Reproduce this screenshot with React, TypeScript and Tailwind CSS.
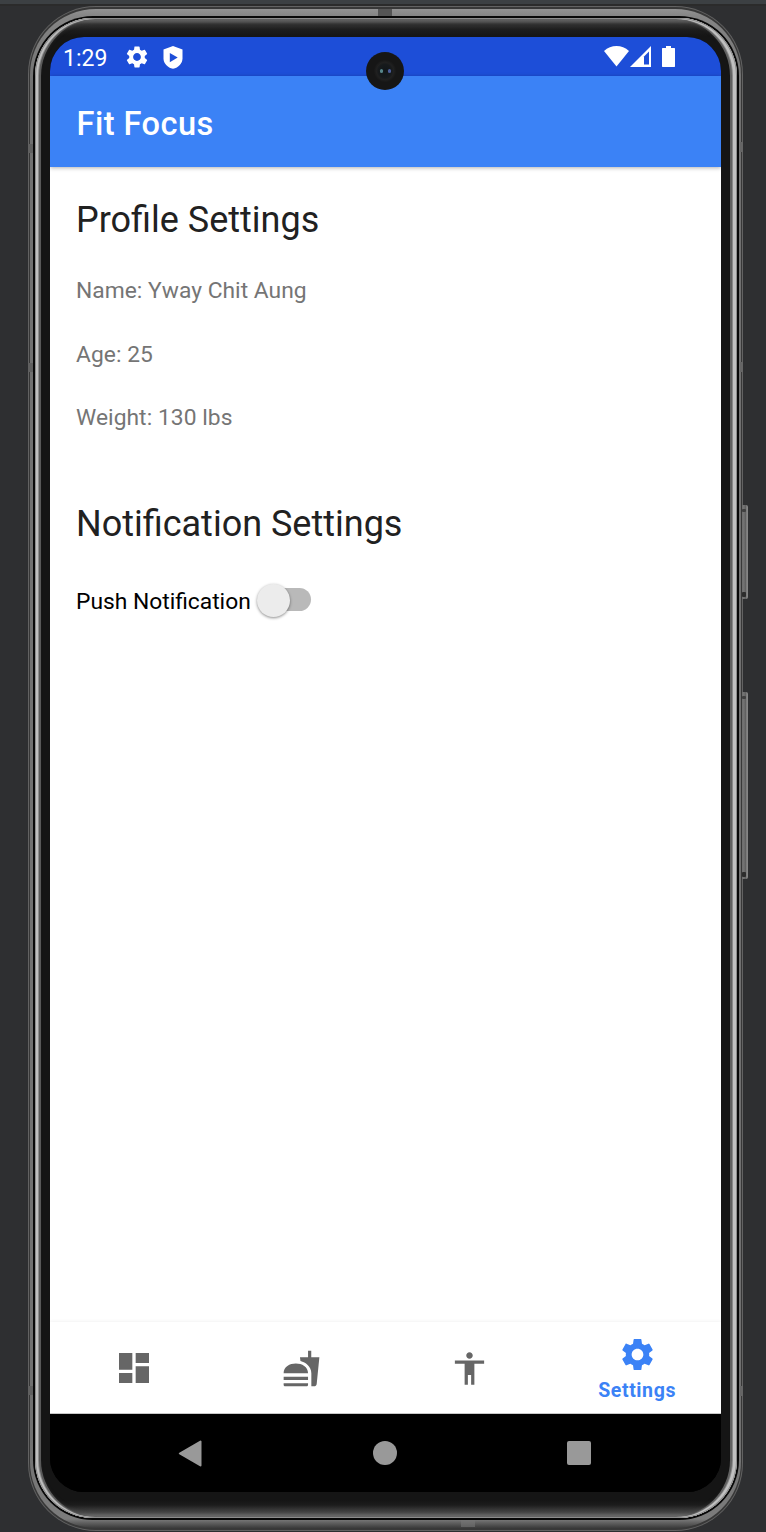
import React from "react";
import { MdAccessibility, MdDashboard, MdFastfood, MdSettings } from "react-icons/md";

function ShieldPlay() {
  return (
    <svg className="block h-[23px] w-[20px]" viewBox="0 0 20 23" fill="none">
      <path d="M10 0 19.500 3.400v9c0 5-4 9-9.500 10.400C4.500 21.400.500 17.400.500 12.400v-9z" fill="#fff" />
      <path d="M6.800 7v9.200l7.900-4.600z" fill="#1d4ed8" />
    </svg>
  );
}

function StatusBar() {
  return (
    <div className="flex h-[39px] shrink-0 items-center bg-[#1d4ed8] pt-px pr-[45px] pl-[13px] text-white">
      <span className="w-[60px] pt-[2px] text-[23px] leading-[27px]">1:29</span>
      <span className="flex w-[40px]">
        <MdSettings className="ml-[1px] h-[26px] w-[26px]" />
      </span>
      <ShieldPlay />
      <div className="ml-auto flex items-center pb-px">
        <svg className="block h-[21px] w-[25px]" viewBox="0 0 25 21">
          <path d="M0 5C3.500 1.500 8 0 12.500 0S21.500 1.500 25 5L12.500 20.500z" fill="#fff" />
        </svg>
        <svg className="ml-px block h-[21px] w-[21px]" viewBox="0 0 21 21">
          <path d="M21 0v21H0z" fill="#fff" />
          <path d="M14 10.500 19 5.500V18.500h-5z" fill="#1d4ed8" />
        </svg>
        <svg className="mr-px ml-[11px] block h-[21px] w-[13px]" viewBox="0 0 13 21">
          <path d="M4 0h5v2h3.500l.5.500v18l-.5.500H.500l-.5-.5v-18l.5-.5H4z" fill="#fff" />
        </svg>
      </div>
    </div>
  );
}

function Camera() {
  return (
    <div className="absolute top-[15px] left-[316px] z-20 flex h-[38px] w-[38px] items-center justify-center gap-[5px] rounded-full bg-[radial-gradient(circle,#101619_0%,#171a1c_25%,#202020_32%,#161616_42%,#161616_100%)]">
      <span className="h-[4px] w-[3px] rounded-full bg-[#57868b]" />
      <span className="h-[4px] w-[3px] rounded-full bg-[#4b5c99]" />
    </div>
  );
}

function BottomTabs() {
  return (
    <nav className="grid h-[92px] shrink-0 grid-cols-4 items-center border-b border-[#c8c8c8] bg-white pt-px text-[#666] shadow-[0_-1px_3px_rgba(0,0,0,0.05)]">
      <MdDashboard className="h-[40px] w-[40px] justify-self-center" />
      <MdFastfood className="h-[39px] w-[39px] justify-self-center" />
      <MdAccessibility className="h-[39px] w-[39px] justify-self-center" />
      <div className="flex flex-col items-center pt-[2px] text-[#3b82f6]">
        <MdSettings className="h-[39px] w-[39px]" />
        <span className="mt-[5px] text-[19.5px] leading-[24px] font-bold tracking-[0.6px]">Settings</span>
      </div>
    </nav>
  );
}

function SystemNav() {
  return (
    <div className="flex h-[78px] shrink-0 items-center justify-between bg-black pr-[130px] pl-[128px]">
      <svg className="block h-[27px] w-[25px]" viewBox="0 0 25 27">
        <path d="M22.500 1.500v24L1.800 13.500z" fill="#999" stroke="#999" strokeWidth="2" strokeLinejoin="round" />
      </svg>
      <span className="h-[24px] w-[24px] rounded-full bg-[#999]" />
      <span className="h-[24px] w-[24px] rounded-[2px] bg-[#999]" />
    </div>
  );
}

function Screen() {
  return (
    <div className="relative flex h-[1455px] w-[671px] flex-col overflow-hidden rounded-[34px] bg-black">
      <StatusBar />
      <header className="z-10 flex h-[91px] shrink-0 items-center bg-[#3b82f6] pt-[5px] pl-[26.500px] shadow-[0_1px_4px_rgba(0,0,0,0.3)]">
        <h1 className="text-[32.6px] font-medium tracking-[0.45px] text-white">Fit Focus</h1>
      </header>
      <main className="flex grow flex-col bg-white pl-[26px]">
        <h2 className="mt-[32px] text-[36px] leading-[42px] text-[#212121]">Profile Settings</h2>
        <p className="mt-[34px] text-[22.8px] leading-[32px] tracking-[0.02px] text-[#757575]">Name: Yway Chit Aung</p>
        <p className="mt-[31.500px] text-[22.8px] leading-[32px] tracking-[0.05px] text-[#757575]">Age: 25</p>
        <p className="mt-[31.500px] text-[22.8px] leading-[32px] tracking-[0.05px] text-[#757575]">Weight: 130 lbs</p>
        <h2 className="mt-[69px] text-[36px] leading-[42px] text-[#212121]">Notification Settings</h2>
        <div className="mt-[36px] flex h-[36px] items-center">
          <span className="w-[181px] pt-[5px] text-[22.8px] leading-[27px] text-black">Push Notification</span>
          <span className="flex h-[23px] w-[54px] items-center rounded-full bg-[linear-gradient(90deg,transparent_20px,#b9b9b9_20px)]">
            <span className="mt-[2px] h-[33px] w-[33px] shrink-0 rounded-full bg-[#ececec] shadow-[0_1px_3px_rgba(0,0,0,0.45)]" />
          </span>
        </div>
      </main>
      <BottomTabs />
      <SystemNav />
      <Camera />
    </div>
  );
}

function SideButton({ className }: { className: string }) {
  return (
    <div className={`absolute left-[742px] w-[6px] rounded-r-[2px] bg-[linear-gradient(90deg,#6e6e6e,#737373_30%,#606060_60%,#858585_80%,#858585)] ${className}`}>
      <span className="absolute top-[4px] left-0 h-[3px] w-[4px] rounded-[1px] bg-[#404040]" />
      <span className="absolute bottom-[2px] left-0 h-[5px] w-[4px] rounded-[1px] bg-[#2d2d2d]" />
    </div>
  );
}

function FrameSeams() {
  return (
    <>
      <span className="absolute top-[9px] left-[378px] h-[7px] w-[14px] bg-[#555]" />
      <span className="absolute top-[1520px] left-[461px] h-[7px] w-[14px] bg-[#777]/60" />
      <span className="absolute top-[144px] left-[28px] h-[9px] w-[5px] bg-[#606060]" />
      <span className="absolute top-[363px] left-[28px] h-[9px] w-[5px] bg-[#606060]" />
      <span className="absolute top-[1386px] left-[28px] h-[9px] w-[5px] bg-[#606060]" />
      <span className="absolute top-[142px] left-[740px] h-[10px] w-[3px] bg-[#666]" />
      <span className="absolute top-[362px] left-[740px] h-[10px] w-[3px] bg-[#666]" />
      <span className="absolute top-[1386px] left-[740px] h-[10px] w-[3px] bg-[#666]" />
    </>
  );
}

export default function App() {
  return (
    <div className="relative h-[1532px] w-[766px] overflow-hidden bg-[#2e2f31] pl-[28px] font-['Roboto',sans-serif]">
      <div className="-ml-[28px] h-[6px] bg-[linear-gradient(#3c4043_0_4px,#2b2b2b_4px)]" />
      <div className="relative h-[1525px] w-[715px] rounded-[68px] bg-[#626262] p-px">
        <div className="h-full rounded-[67px] bg-[#383838] pt-[2px] pr-px pb-[2px] pl-px">
          <div className="h-full rounded-[66px] bg-[linear-gradient(#929292,#858585_7px,#707070_80px,#707070_1430px,#7c7c7c_1510px,#3b3b3b)] pt-[7px] pr-[2px] pb-[8px] pl-[3px]">
            <div className="h-full rounded-[60px] bg-[#080808] pt-[2px] pr-[2px] pb-[2px] pl-[2px]">
              <div className="h-full rounded-[58px] bg-[linear-gradient(#888,#333_6px,#1c1c1c_12px,#151515_18px,#151515_calc(100%_-_18px),#1c1c1c_calc(100%_-_13px),#4a4a4a_calc(100%_-_5px),#999)] pt-[19px] pl-[15px] shadow-[inset_0_0_0_1px_#8c8c8c,inset_2px_0_0_1px_#bebebe,inset_-3px_0_0_1px_#c0c0c0,inset_3px_0_0_1px_#8c8c8c,inset_-4px_0_0_1px_#888,inset_5px_0_0_1px_#595959,inset_-6px_0_0_1px_#606060,inset_0_0_5px_2px_#505050]">
                <Screen />
              </div>
            </div>
          </div>
        </div>
      </div>
      <FrameSeams />
      <SideButton className="top-[505px] h-[94px]" />
      <SideButton className="top-[692px] h-[187px]" />
    </div>
  );
}
